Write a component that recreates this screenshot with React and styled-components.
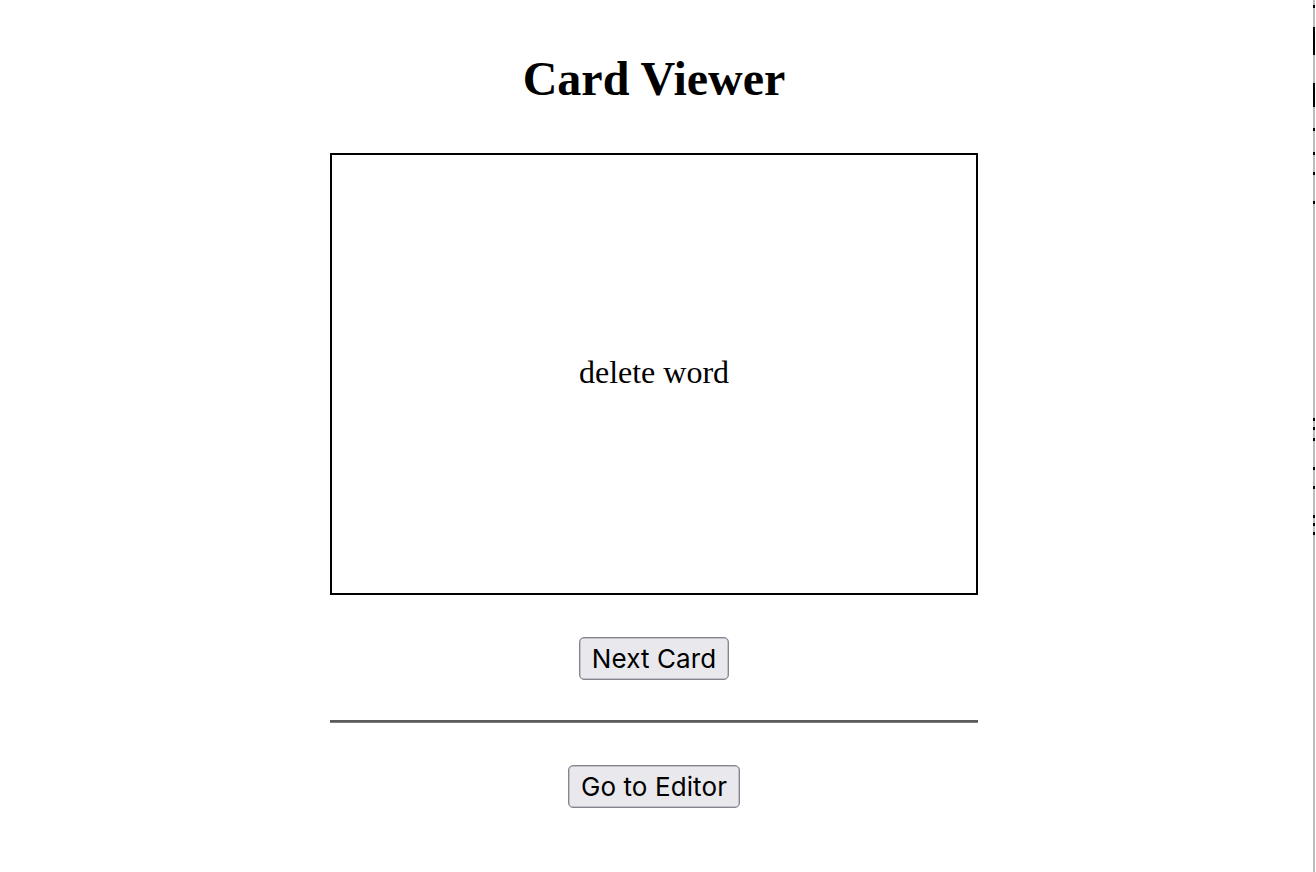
import React from 'react';
import styled, { createGlobalStyle } from 'styled-components';

const GlobalStyle = createGlobalStyle`
  html, body {
    margin: 0;
    padding: 0;
    background: #ffffff;
  }
  body {
    font-family: "Liberation Serif", "Times New Roman", serif;
    color: #000000;
  }
`;

const Page = styled.div`
  display: flex;
  width: 100%;
  min-height: 872px;
`;

const Main = styled.main`
  flex: 1;
  display: flex;
  flex-direction: column;
  align-items: center;
  padding-top: 52px;
`;

const Title = styled.h1`
  margin: 0;
  font-family: "Liberation Serif", "Times New Roman", serif;
  font-size: 48px;
  line-height: 53px;
  font-weight: bold;
`;

const Card = styled.div`
  margin-top: 48px;
  box-sizing: border-box;
  width: 648px;
  height: 442px;
  padding-bottom: 4px;
  border: 2px solid #000000;
  display: flex;
  align-items: center;
  justify-content: center;
  font-size: 32px;
  line-height: 37px;
`;

const Button = styled.button`
  margin-top: ${p => p.$gap}px;
  box-sizing: border-box;
  height: 43px;
  padding: 6px 12px;
  font-family: Inter, "Liberation Sans", Arial, sans-serif;
  font-size: 26px;
  line-height: 29px;
  letter-spacing: 0.1px;
  color: #000000;
  background: #e9e9ed;
  border: 1px solid #85858f;
  border-radius: 5px;
  box-shadow: inset 0 0 0 0.5px #9a9aa6;
  cursor: pointer;
`;

const Divider = styled.div`
  margin-top: 40px;
  width: 648px;
  box-sizing: border-box;
  height: 3px;
  border-top: 2px solid #5c5c5c;
  border-bottom: 1px solid #7c7c7c;
`;

const Strip = styled.aside`
  position: relative;
  width: 8px;
  flex-shrink: 0;
  background: linear-gradient(
    to right,
    #ffffff 0,
    #ffffff 5px,
    #bdbdbd 5px,
    #bdbdbd 7px,
    #ffffff 7px
  );
`;

const Mark = styled.span`
  position: absolute;
  left: 5px;
  width: 2px;
  top: ${p => p.$top}px;
  height: ${p => p.$h}px;
  background: #000000;
`;

const marks = [
  [5, 3], [27, 28], [83, 24], [128, 3], [152, 3], [172, 3], [201, 3],
  [418, 3], [427, 3], [438, 3], [467, 3], [486, 3], [515, 3], [523, 3], [532, 3],
];

const App = () => {
  return (
    <>
      <GlobalStyle />
      <Page>
        <Main>
          <Title>Card Viewer</Title>
          <Card>delete word</Card>
          <Button $gap={42}>Next Card</Button>
          <Divider />
          <Button $gap={42}>Go to Editor</Button>
        </Main>
        <Strip>
          {marks.map(([top, h]) => (
            <Mark key={top} $top={top} $h={h} />
          ))}
        </Strip>
      </Page>
    </>
  );
};

export default App;
